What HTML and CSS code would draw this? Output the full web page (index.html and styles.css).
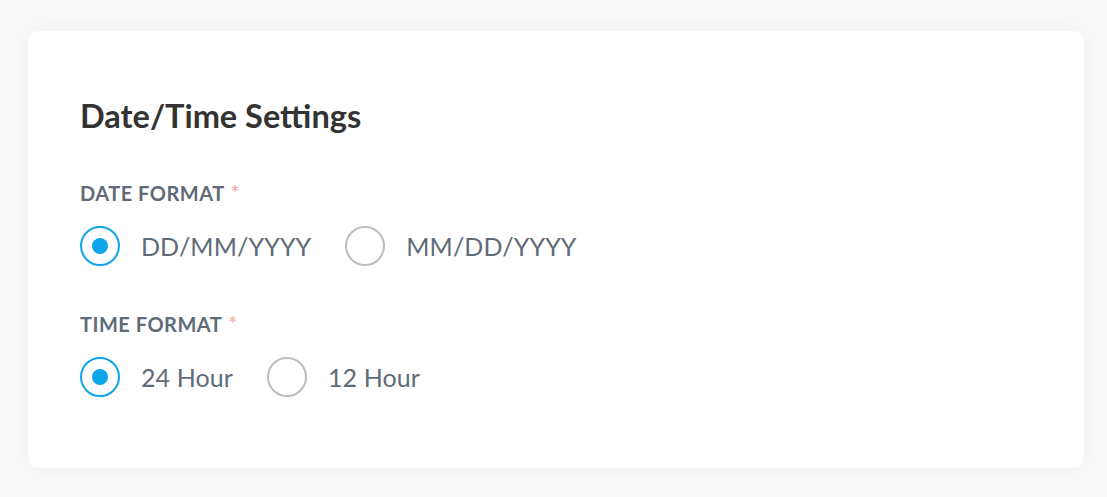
FILE: index.html
```html
<!DOCTYPE html>
<html lang="en">
<head>
<meta charset="utf-8">
<title>Date/Time Settings</title>
<link rel="stylesheet" href="styles.css">
</head>
<body>
<main class="page">
  <section class="card">
    <h2 class="card-title">Date/Time Settings</h2>
    <div class="field">
      <div class="field-label">DATE FORMAT <span class="req">*</span></div>
      <div class="radio-group">
        <label class="radio checked"><span class="radio-circle"></span><span class="radio-text">DD/MM/YYYY</span></label>
        <label class="radio"><span class="radio-circle"></span><span class="radio-text">MM/DD/YYYY</span></label>
      </div>
    </div>
    <div class="field">
      <div class="field-label">TIME FORMAT <span class="req">*</span></div>
      <div class="radio-group">
        <label class="radio checked"><span class="radio-circle"></span><span class="radio-text">24 Hour</span></label>
        <label class="radio"><span class="radio-circle"></span><span class="radio-text">12 Hour</span></label>
      </div>
    </div>
  </section>
</main>
</body>
</html>
```
FILE: styles.css
```css
* { box-sizing: border-box; }
html, body { margin: 0; padding: 0; }
body {
  background: #fafafa;
  font-family: Lato, "Open Sans", sans-serif;
  width: 1107px;
  height: 497px;
  overflow: hidden;
}
.page {
  padding: 31px 23px 0 28px;
}
.card {
  background: #ffffff;
  border-radius: 10px;
  height: 437px;
  padding: 66px 52px 0 52px;
  box-shadow: 0 0 24px rgba(0, 0, 0, 0.05);
}
.card-title {
  margin: 0;
  font-size: 32.5px;
  font-weight: 700;
  color: #333333;
  line-height: 38px;
}
.field { margin-top: 46px; }
.field + .field { margin-top: 46px; }
.field-label {
  font-size: 20px;
  font-weight: 700;
  color: #5f6b78;
  line-height: 24px;
  letter-spacing: 0.5px;
}
.req {
  color: #f7a8a8;
  font-weight: 400;
  font-size: 22px;
  margin-left: 1px;
}
.radio-group {
  display: flex;
  align-items: center;
  gap: 34px;
  margin-top: 21px;
}
.radio {
  display: flex;
  align-items: center;
  gap: 21px;
}
.radio-circle {
  width: 40px;
  height: 40px;
  border-radius: 50%;
  border: 2px solid #bdbdbd;
  display: flex;
  align-items: center;
  justify-content: center;
  flex: none;
}
.radio.checked .radio-circle { border-color: #0ea5e9; }
.radio.checked .radio-circle::after {
  content: "";
  width: 16px;
  height: 16px;
  border-radius: 50%;
  background: #0ea5e9;
}
.radio-text {
  font-size: 25px;
  color: #5f6b78;
  line-height: 30px;
  letter-spacing: 0.1px;
}
```
